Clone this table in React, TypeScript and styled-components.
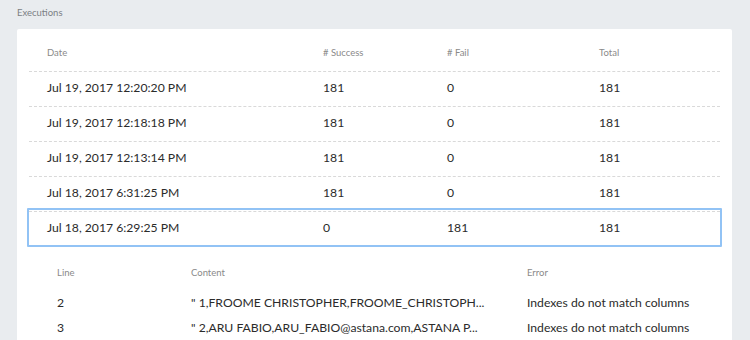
import React from "react";
import styled, { createGlobalStyle } from "styled-components";

const executions: ExecutionRow[] = [
  { date: "Jul 19, 2017 12:20:20 PM", success: 181, fail: 0, total: 181 },
  { date: "Jul 19, 2017 12:18:18 PM", success: 181, fail: 0, total: 181 },
  { date: "Jul 19, 2017 12:13:14 PM", success: 181, fail: 0, total: 181 },
  { date: "Jul 18, 2017 6:31:25 PM", success: 181, fail: 0, total: 181 },
  { date: "Jul 18, 2017 6:29:25 PM", success: 0, fail: 181, total: 181 },
];

const errors: ErrorRow[] = [
  {
    line: 2,
    content: "\" 1,FROOME CHRISTOPHER,FROOME_CHRISTOPH...",
    error: "Indexes do not match columns",
  },
  {
    line: 3,
    content: "\" 2,ARU FABIO,ARU_FABIO@astana.com,ASTANA P...",
    error: "Indexes do not match columns",
  },
];

function App() {
  const selected = 4;
  return (
    <>
      <GlobalStyle />
      <Page>
        <SectionTitle>Executions</SectionTitle>
        <Card>
          <HeaderRow>
            <HeadCell>Date</HeadCell>
            <HeadCell># Success</HeadCell>
            <HeadCell># Fail</HeadCell>
            <HeadCell>Total</HeadCell>
          </HeaderRow>
          {executions.map((row, i) => (
            <Row key={row.date} $active={i === selected}>
              <Cell>{row.date}</Cell>
              <Cell>{row.success}</Cell>
              <Cell>{row.fail}</Cell>
              <Cell>{row.total}</Cell>
            </Row>
          ))}
          <Details>
            <DetailHeader>
              <HeadCell>Line</HeadCell>
              <HeadCell>Content</HeadCell>
              <HeadCell>Error</HeadCell>
            </DetailHeader>
            {errors.map((row) => (
              <DetailRow key={row.line}>
                <Cell>{row.line}</Cell>
                <Cell>{row.content}</Cell>
                <Cell>{row.error}</Cell>
              </DetailRow>
            ))}
          </Details>
        </Card>
      </Page>
    </>
  );
}

type ExecutionRow = {
  date: string;
  success: number;
  fail: number;
  total: number;
};

type ErrorRow = {
  line: number;
  content: string;
  error: string;
};

const GlobalStyle = createGlobalStyle`
  body {
    margin: 0;
    background: #e9ecef;
    font-family: Lato, "Open Sans", sans-serif;
  }
`;

const Page = styled.div`
  height: 340px;
  overflow: hidden;
  padding: 7px 18px 0 17px;
  box-sizing: border-box;
`;

const SectionTitle = styled.div`
  font-size: 9.5px;
  color: #7b7f84;
  height: 22px;
  line-height: 12px;
`;

const Card = styled.div`
  background: #ffffff;
  border-radius: 2px;
  padding: 12px 12px 20px;
`;

const HeaderRow = styled.div`
  display: grid;
  grid-template-columns: 276px 124px 152px 1fr;
  padding: 0 0 8px 18px;
  height: 30px;
  box-sizing: border-box;
  align-items: center;
`;

const HeadCell = styled.div`
  font-size: 9.5px;
  color: #8a8a8a;
`;

const Row = styled.div<{ $active?: boolean }>`
  position: relative;
  display: grid;
  grid-template-columns: 276px 124px 152px 1fr;
  padding: 0 0 3px 18px;
  height: 35px;
  box-sizing: border-box;
  align-items: center;
  border-top: 1px dashed #d9d9d9;

  /* selected run gets a light blue frame around it */
  &::after {
    content: "";
    display: ${(p) => (p.$active ? "block" : "none")};
    position: absolute;
    top: -4px;
    bottom: -1px;
    left: -2px;
    right: -2px;
    border: 2px solid #92c3f5;
    border-radius: 1px;
    pointer-events: none;
  }
`;

const Cell = styled.div`
  font-size: 12.2px;
  color: #2b2b2b;
  white-space: nowrap;
`;

const Details = styled.div`
  padding: 16px 0 0 28px;
`;

const DetailHeader = styled.div`
  display: grid;
  grid-template-columns: 134px 336px 1fr;
  height: 20px;
  margin-bottom: 8px;
  align-items: center;
`;

const DetailRow = styled.div`
  display: grid;
  grid-template-columns: 134px 336px 1fr;
  height: 25px;
  align-items: center;
`;

export default App;
